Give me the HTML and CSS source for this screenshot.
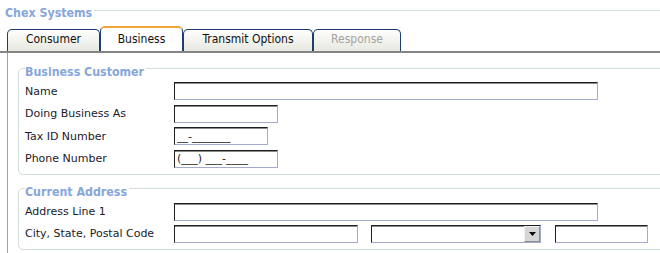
FILE: index.html
```html
<!DOCTYPE html>
<html>
<head>
<meta charset="utf-8">
<title>Chex Systems</title>
<link rel="stylesheet" href="styles.css">
</head>
<body>
<div class="page">
  <div class="header">
    <span class="title">Chex Systems</span>
    <span class="header-rule"></span>
  </div>
  <div class="tabs">
    <div class="tab tab-consumer">Consumer</div>
    <div class="tab tab-business active">Business</div>
    <div class="tab tab-transmit">Transmit Options</div>
    <div class="tab tab-response disabled">Response</div>
  </div>
  <div class="panel">
    <div class="group">
      <div class="legend">Business Customer</div>
      <div class="rows">
        <div class="row"><label class="lbl">Name</label><input class="input w-long" type="text" value=""></div>
        <div class="row"><label class="lbl">Doing Business As</label><input class="input w-dba" type="text" value=""></div>
        <div class="row"><label class="lbl">Tax ID Number</label><input class="input w-tax" type="text" value="__-_______"></div>
        <div class="row"><label class="lbl">Phone Number</label><input class="input w-phone" type="text" value="(___) ___-____"></div>
      </div>
    </div>
    <div class="group">
      <div class="legend">Current Address</div>
      <div class="rows rows-tight">
        <div class="row"><label class="lbl">Address Line 1</label><input class="input w-long" type="text" value=""></div>
        <div class="row">
          <label class="lbl">City, State, Postal Code</label>
          <input class="input w-city" type="text" value="">
          <div class="select w-select">
            <span class="select-btn">
              <svg width="7" height="4" viewBox="0 0 7 4"><path d="M0 0H7L3.5 4Z" fill="#000"/></svg>
            </span>
          </div>
          <input class="input w-postal" type="text" value="">
        </div>
      </div>
    </div>
  </div>
</div>
</body>
</html>
```
FILE: styles.css
```css
html, body {
  margin: 0;
  padding: 0;
  background: #ffffff;
  overflow: hidden;
}

.page {
  width: 700px;
  font-family: "DejaVu Sans", Verdana, sans-serif;
}

.header {
  display: flex;
  align-items: flex-start;
  height: 26px;
  padding-left: 5px;
  box-sizing: border-box;
}

.title {
  font: bold 12.3px/15px "DejaVu Sans Condensed", "DejaVu Sans", sans-serif;
  color: #87a6da;
  margin-top: 6px;
}

.header-rule {
  flex: 1;
  margin-top: 10px;
  margin-left: 2px;
  border-top: 1px solid #d4e2e2;
}

.tabs {
  display: flex;
  align-items: flex-end;
  height: 25px;
  padding-left: 7px;
  border-bottom: 2px solid #858585;
}

.tab {
  box-sizing: border-box;
  height: 22px;
  padding-top: 2px;
  border: 1px solid #1f3e6c;
  border-bottom: none;
  border-radius: 5px 5px 0 0;
  background: linear-gradient(#fefefd, #e8e8e1);
  font: 12px/14px "DejaVu Sans Condensed", "DejaVu Sans", sans-serif;
  color: #111111;
  text-align: center;
}

.tab.active {
  height: 25px;
  padding-top: 4px;
  border-top: 2px solid #f0a43a;
  background: #ffffff;
}

.tab.disabled {
  color: #a3a3a3;
}

.tab-consumer { width: 93px; }
.tab-business { width: 83px; }
.tab-transmit { width: 130px; }
.tab-response { width: 88px; }

.panel {
  margin-left: 7px;
  border-left: 1px solid #a0a0a0;
  padding: 15px 0 8px 10px;
}

.group {
  border: 1px solid #d3dddd;
  border-radius: 5px;
  padding: 0 0 6px 6px;
}

.group + .group {
  margin-top: 13px;
}

.legend {
  width: fit-content;
  margin-top: -4px;
  padding-right: 2px;
  background: #ffffff;
  font: bold 12.3px/15px "DejaVu Sans Condensed", "DejaVu Sans", sans-serif;
  color: #87a6da;
}

.rows {
  display: flex;
  flex-direction: column;
  gap: 4.4px;
  margin-top: 2.4px;
}

.rows-tight {
  margin-top: 3px;
  gap: 4px;
}

.row {
  display: flex;
  align-items: center;
  height: 18px;
}

.lbl {
  flex: none;
  width: 149px;
  font-size: 11px;
  color: #1a1a2a;
}

.input {
  box-sizing: border-box;
  flex: none;
  height: 18px;
  margin: 0;
  padding: 0 0 0 2px;
  border: 1px solid;
  border-color: #1e1e1e #a4aacb #a4aacb #1e1e1e;
  box-shadow: inset 0 1px 0 #8a8a8a;
  background: #ffffff;
  font: 11px "DejaVu Sans", Verdana, sans-serif;
  color: #222222;
  outline: none;
}

.w-long { width: 424px; }
.w-dba { width: 104px; }
.w-tax { width: 94px; }
.w-phone { width: 104px; }
.w-city { width: 184px; }
.w-select { width: 170px; margin-left: 13px; }
.w-postal { width: 93px; margin-left: 14px; }

.select {
  box-sizing: border-box;
  flex: none;
  display: flex;
  justify-content: flex-end;
  height: 18px;
  padding: 0;
  border: 1px solid;
  border-color: #1e1e1e #a4aacb #a4aacb #1e1e1e;
  box-shadow: inset 0 1px 0 #8a8a8a;
  background: #ffffff;
}

.select-btn {
  box-sizing: border-box;
  width: 16px;
  display: flex;
  align-items: center;
  justify-content: center;
  background: #d6d6d6;
  border: 1px solid;
  border-color: #f2f2f2 #8e8e8e #8e8e8e #f2f2f2;
}
```
